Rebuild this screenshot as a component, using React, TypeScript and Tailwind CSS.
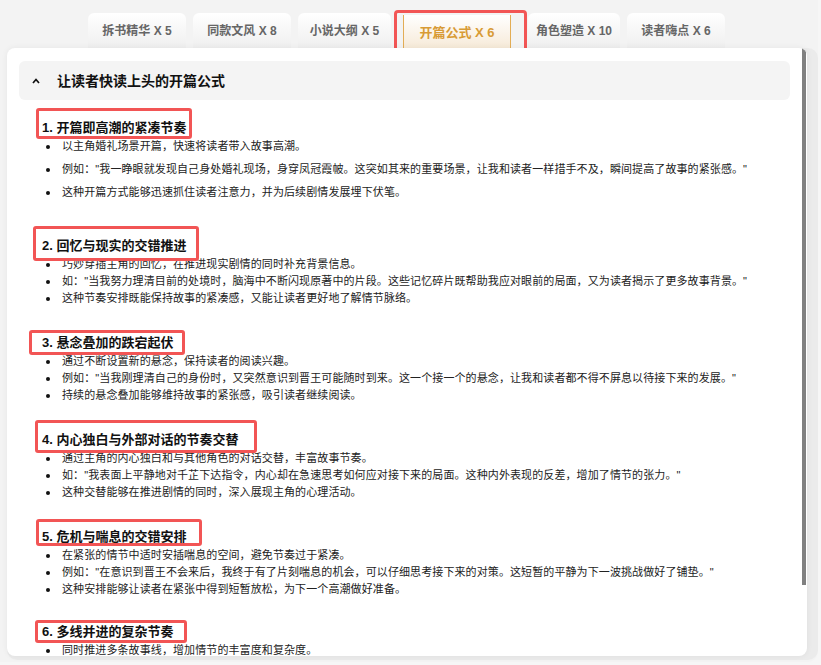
import React from 'react';

type Section = {
  title: string;
  points: string[];
  // spacing above the heading and the highlight frame around it
  gap: string;
  frame: string;
};

const tabs = [
  { label: '拆书精华 X 5', w: 'w-[98px]' },
  { label: '同款文风 X 8', w: 'w-[98px]' },
  { label: '小说大纲 X 5', w: 'w-[93px]' },
  { label: '开篇公式 X 6', w: 'w-[108px]', active: true },
  { label: '角色塑造 X 10', w: 'w-[92px]' },
  { label: '读者嗨点 X 6', w: 'w-[98px]' },
];

const sections: Section[] = [
  {
    title: '1. 开篇即高潮的紧凑节奏',
    gap: 'mt-[18px]',
    frame: '-top-[10px] -left-[6px] w-[156px] h-[31px]',
    points: [
      '以主角婚礼场景开篇，快速将读者带入故事高潮。',
      '例如："我一睁眼就发现自己身处婚礼现场，身穿凤冠霞帔。这突如其来的重要场景，让我和读者一样措手不及，瞬间提高了故事的紧张感。"',
      '这种开篇方式能够迅速抓住读者注意力，并为后续剧情发展埋下伏笔。',
    ],
  },
  {
    title: '2. 回忆与现实的交错推进',
    gap: 'mt-[35px]',
    frame: '-top-[10px] -left-[9px] w-[166px] h-[35px]',
    points: [
      '巧妙穿插主角的回忆，在推进现实剧情的同时补充背景信息。',
      '如："当我努力理清目前的处境时，脑海中不断闪现原著中的片段。这些记忆碎片既帮助我应对眼前的局面，又为读者揭示了更多故事背景。"',
      '这种节奏安排既能保持故事的紧凑感，又能让读者更好地了解情节脉络。',
    ],
  },
  {
    title: '3. 悬念叠加的跌宕起伏',
    gap: 'mt-[26px]',
    frame: '-top-[3px] -left-[13px] w-[156px] h-[25px]',
    points: [
      '通过不断设置新的悬念，保持读者的阅读兴趣。',
      '例如："当我刚理清自己的身份时，又突然意识到晋王可能随时到来。这一个接一个的悬念，让我和读者都不得不屏息以待接下来的发展。"',
      '持续的悬念叠加能够维持故事的紧张感，吸引读者继续阅读。',
    ],
  },
  {
    title: '4. 内心独白与外部对话的节奏交替',
    gap: 'mt-[26px]',
    frame: '-top-[10px] -left-[7px] w-[222px] h-[33px]',
    points: [
      '通过主角的内心独白和与其他角色的对话交替，丰富故事节奏。',
      '如："我表面上平静地对千芷下达指令，内心却在急速思考如何应对接下来的局面。这种内外表现的反差，增加了情节的张力。"',
      '这种交替能够在推进剧情的同时，深入展现主角的心理活动。',
    ],
  },
  {
    title: '5. 危机与喘息的交错安排',
    gap: 'mt-[26px]',
    frame: '-top-[8px] -left-[6px] w-[166px] h-[27px]',
    points: [
      '在紧张的情节中适时安插喘息的空间，避免节奏过于紧凑。',
      '例如："在意识到晋王不会来后，我终于有了片刻喘息的机会，可以仔细思考接下来的对策。这短暂的平静为下一波挑战做好了铺垫。"',
      '这种安排能够让读者在紧张中得到短暂放松，为下一个高潮做好准备。',
    ],
  },
  {
    title: '6. 多线并进的复杂节奏',
    gap: 'mt-[24px]',
    frame: '-top-[2px] -left-[7px] w-[152px] h-[23px]',
    points: ['同时推进多条故事线，增加情节的丰富度和复杂度。'],
  },
];

function Tab({ label, w, active }: { label: string; w: string; active?: boolean }) {
  if (active) {
    return (
      <div className="relative w-[123px] h-[35px] flex">
        <div
          className={`${w} ml-[5px] h-full border-x border-[#e3ad55] bg-gradient-to-b from-white to-[#f6e9d6] flex items-center justify-center text-[13px] font-bold text-[#d89b35] mt-[2px]`}
        >
          {label}
        </div>
        <div className="absolute -top-[3px] -left-[4px] w-[133px] h-[50px] border-[3px] border-[#f25555] rounded-[4px]" />
      </div>
    );
  }
  return (
    <div
      className={`${w} h-[35px] rounded-t-[6px] bg-gradient-to-b from-white to-[#efefef] flex items-center justify-center text-[12px] font-semibold text-[#666]`}
    >
      {label}
    </div>
  );
}

export default function App() {
  return (
    <div className="w-[821px] h-[665px] bg-[#f6f6f6] overflow-hidden font-['Liberation_Sans','Noto_Sans_CJK_SC',sans-serif]">
      <div className="w-[818px] h-[662px] bg-[#f3f3f3] rounded-br-[10px]">
        {/* tab strip */}
        <div className="flex gap-[7px] pt-[13px] pl-[88px] h-[48px]">
          {tabs.map((t) => (
            <Tab key={t.label} {...t} />
          ))}
        </div>

        {/* content card */}
        <div className="ml-[7px] w-[811px] h-[612px] bg-[#ebebeb] rounded-[10px] pr-[11px] pb-[4px]">
          <div className="relative w-[800px] h-[608px] bg-white rounded-lg overflow-hidden shadow-[0_0_6px_rgba(0,0,0,0.06)] pt-[13px] pl-[12px] pr-[17px]">
            <div className="h-[39px] bg-[#f4f4f4] rounded-md flex items-center pl-[13px]">
              <svg width="8" height="6" viewBox="0 0 8 6" className="mt-[1px]">
                <polyline points="1,5 4,1.5 7,5" fill="none" stroke="#111" strokeWidth="1.7" />
              </svg>
              <span className="ml-[17px] text-[14px] font-bold text-[#111] leading-[20px]">
                让读者快读上头的开篇公式
              </span>
            </div>

            <div className="pl-[23px]">
              {sections.map((s) => (
                <div key={s.title} className={s.gap}>
                  <div className="relative h-[20px] leading-[20px] text-[13px] font-bold text-[#111] whitespace-nowrap">
                    {s.title}
                    <div className={`absolute ${s.frame} border-[3px] border-[#f25555] rounded-[3px]`} />
                  </div>
                  <ul className={s.title.startsWith('1.') ? 'flex flex-col gap-[6px]' : 'flex flex-col'}>
                    {s.points.map((p) => (
                      <li key={p} className="flex items-center h-[17px] text-[11px] tracking-[0.1px] text-[#222] whitespace-nowrap">
                        <span className="w-[4px] h-[4px] rounded-full bg-[#111] ml-[4px] mr-[12px] shrink-0" />
                        {p}
                      </li>
                    ))}
                  </ul>
                </div>
              ))}
            </div>

            {/* scroll thumb */}
            <div className="absolute top-0 right-[1px] w-[4px] h-[537px] bg-[#808080]" />
          </div>
        </div>
      </div>
    </div>
  );
}
